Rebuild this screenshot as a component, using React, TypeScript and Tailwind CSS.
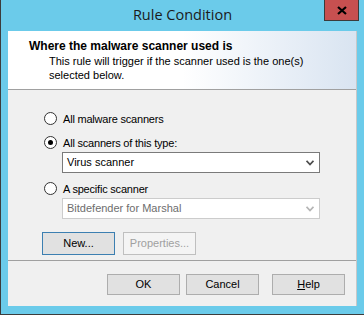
import React from 'react'

const font = { fontFamily: '"Liberation Sans", Arial, sans-serif' }

const Radio = ({ checked, label }: { checked?: boolean; label: string }) => (
  <div className="flex items-center h-[13px]">
    <span className="w-[13px] h-[13px] rounded-full border border-[#333] bg-white flex items-center justify-center shrink-0">
      {checked && <span className="w-[5px] h-[5px] rounded-full bg-black" />}
    </span>
    <span className="ml-[6px] text-[11px] leading-[14px] tracking-[-0.2px] text-black">{label}</span>
  </div>
)

const Chevron = ({ color }: { color: string }) => (
  <svg width="8" height="6" viewBox="0 0 8 6" className="shrink-0">
    <path d="M0.5 0.8 L4 4.5 L7.5 0.8" fill="none" stroke={color} strokeWidth="1.8" />
  </svg>
)

const Combo = ({ value, disabled }: { value: string; disabled?: boolean }) => (
  <div
    className={`ml-[18px] w-[258px] h-[21px] bg-white border flex items-center justify-between pl-[4px] pr-[5px] text-[11px] ${
      disabled ? 'border-[#cccccc] text-[#6d6d6d]' : 'border-[#7a7a7a] text-black'
    }`}
  >
    <span>{value}</span>
    <Chevron color={disabled ? '#b5b5b5' : '#4d4d4d'} />
  </div>
)

const Btn = ({
  children,
  variant = 'normal',
  className = '',
}: {
  children: React.ReactNode
  variant?: 'normal' | 'focus' | 'disabled'
  className?: string
}) => {
  const styles = {
    normal: 'border-[#adadad] bg-[#e1e1e1] text-black',
    focus: 'border-[#3c7fb1] bg-[#e1e1e1] text-black',
    disabled: 'border-[#bfbfbf] bg-[#f4f4f4] text-[#a0a0a0]',
  }
  return (
    <div className={`w-[73px] border flex items-center justify-center text-[11px] ${styles[variant]} ${className}`}>
      {children}
    </div>
  )
}

export default function App() {
  return (
    <div
      className="w-[364px] h-[315px] bg-[#6bcbea] border-l border-b border-[#3c3c3c] flex flex-col pr-[7px] pl-[7px] pb-[8px]"
      style={font}
    >
      {/* title bar */}
      <div className="h-[31px] relative flex items-start justify-center shrink-0">
        <span
          className="mt-[5px] text-[14.5px] leading-[20px] text-[#1b1b1b]"
          style={{ fontFamily: '"Open Sans", "Noto Sans", sans-serif' }}
        >
          Rule Condition
        </span>
        <div className="absolute top-0 right-[-2px] w-[35px] h-[21px] bg-[#c75050] border border-t-0 border-[#3b3b3b] flex items-center justify-center">
          <svg width="10" height="9" viewBox="0 0 10 9">
            <path d="M1 1 L9 8 M9 1 L1 8" stroke="#000" strokeWidth="2.2" />
          </svg>
        </div>
      </div>

      {/* client */}
      <div className="flex-1 flex flex-col bg-[#f0f0f0] border-r border-[#c8c8c8]">
        <div className="h-[58px] bg-gradient-to-r from-white from-50% to-[#d9e4f1] pl-[21px] pt-[8px] shrink-0">
          <div className="text-[12px] leading-[14px] font-bold text-black">Where the malware scanner used is</div>
          <div className="ml-[20px] mt-[1px] text-[11px] leading-[14px] text-black">
            This rule will trigger if the scanner used is the one(s)
            <br />
            selected below.
          </div>
        </div>

        <div className="h-[172px] border-t border-b border-[#a0a0a0] pl-[36px] pt-[22px] flex flex-col shrink-0">
          <Radio label="All malware scanners" />
          <div className="mt-[11px]">
            <Radio checked label="All scanners of this type:" />
          </div>
          <div className="mt-[3px]">
            <Combo value="Virus scanner" />
          </div>
          <div className="mt-[9px]">
            <Radio label="A specific scanner" />
          </div>
          <div className="mt-[3px]">
            <Combo value="Bitdefender for Marshal" disabled />
          </div>
          <div className="mt-[13px] ml-[-2px] flex gap-[8px]">
            <Btn variant="focus" className="h-[23px]">New...</Btn>
            <Btn variant="disabled" className="h-[23px]">Properties...</Btn>
          </div>
        </div>

        <div className="flex-1 flex justify-end pt-[13px] pr-[11px]">
          <Btn className="h-[21px]">OK</Btn>
          <Btn className="h-[21px] ml-[6px]">Cancel</Btn>
          <Btn className="h-[21px] ml-[13px]">
            <span>
              <span className="underline">H</span>elp
            </span>
          </Btn>
        </div>
      </div>
    </div>
  )
}
